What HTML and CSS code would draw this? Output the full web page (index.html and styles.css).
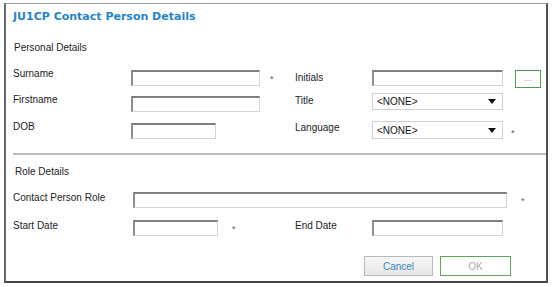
FILE: index.html
```html
<!DOCTYPE html>
<html>
<head>
<meta charset="utf-8">
<link rel="stylesheet" href="styles.css">
</head>
<body>
<div class="dialog">
  <h1 class="title">JU1CP Contact Person Details</h1>
  <div class="section-title">Personal Details</div>
  <div class="grid personal">
    <div class="lbl lbl-left">Surname</div>
    <div class="field"><span class="input w129"></span><span class="req req-a">*</span></div>
    <div class="lbl lbl-right lbl-init">Initials</div>
    <div class="field"><span class="input w131"></span><span class="dots">...</span></div>

    <div class="lbl lbl-left">Firstname</div>
    <div class="field"><span class="input w129"></span></div>
    <div class="lbl lbl-right">Title</div>
    <div class="field"><span class="select w131 up3"><span>&lt;NONE&gt;</span><svg width="8" height="5" viewBox="0 0 8 5"><polygon points="0,0 8,0 4,5" fill="#111"/></svg></span></div>

    <div class="lbl lbl-left">DOB</div>
    <div class="field"><span class="input w85"></span></div>
    <div class="lbl lbl-right">Language</div>
    <div class="field"><span class="select w131 tall up2"><span>&lt;NONE&gt;</span><svg width="8" height="5" viewBox="0 0 8 5"><polygon points="0,0 8,0 4,5" fill="#111"/></svg></span><span class="req req-b">*</span></div>
  </div>
  <div class="sep"></div>
  <div class="section-title role-title">Role Details</div>
  <div class="grid role">
    <div class="lbl lbl-role">Contact Person Role</div>
    <div class="field span3"><span class="input w374"></span><span class="req req-c">*</span></div>

    <div class="lbl lbl-role">Start Date</div>
    <div class="field"><span class="input w85"></span><span class="req req-c">*</span></div>
    <div class="lbl lbl-role">End Date</div>
    <div class="field"><span class="input w131"></span></div>
  </div>
  <div class="footer">
    <button class="btn cancel">Cancel</button>
    <button class="btn ok">OK</button>
  </div>
</div>
</body>
</html>
```
FILE: styles.css
```css
* { box-sizing: border-box; }
html, body { margin: 0; padding: 0; background: #fff; }
body {
  font-family: "Liberation Sans", Arial, sans-serif;
  font-size: 10px;
  color: #222;
  width: 554px;
  height: 287px;
  overflow: hidden;
}
.dialog {
  margin: 3px 0 0 4px;
  width: 544px;
  height: 280px;
  border-style: solid;
  border-width: 1px 2px 2px 2px;
  border-color: #9a9a9a #505050 #444 #6a6a6a;
  padding: 5px 0 0 7px;
}
.title {
  margin: 0;
  font-family: "DejaVu Sans", Verdana, sans-serif;
  font-weight: bold;
  font-size: 11px;
  line-height: 16px;
  color: #2384cc;
}
.section-title {
  margin-top: 16px;
  line-height: 14px;
  font-size: 10px;
  color: #222;
  padding-left: 1px;
}
.grid {
  display: grid;
}
.personal {
  margin-top: 15px;
  grid-template-columns: 118px 164px 77px auto;
  grid-template-rows: 26px 27px 16px;
}
.role {
  margin-top: 13px;
  grid-template-columns: 120px 162px 77px auto;
  grid-template-rows: 28px 16px;
}
.lbl {
  align-self: start;
  line-height: 12px;
  white-space: nowrap;
}
.lbl-left { margin-top: -2px; }
.lbl-right { margin-top: -1px; }
.lbl-init { margin-top: 2px; }
.lbl-role { margin-top: 0; }
.field {
  display: flex;
  align-items: flex-start;
}
.span3 { grid-column: 2 / 5; }
.input {
  display: block;
  flex-shrink: 0;
  height: 16px;
  background: #fff;
  border-style: solid;
  border-width: 2px 1px 1px 2px;
  border-color: #7e7e7e #d4d4d4 #d4d4d4 #8e8e8e;
}
.w129 { width: 129px; }
.w131 { width: 131px; }
.w85 { width: 85px; }
.w374 { width: 374px; }
.req {
  font-size: 9px;
  color: #555;
  line-height: 9px;
  margin-top: 5px;
}
.req-a { margin-left: 10px; }
.req-b { margin-left: 8px; margin-top: 6px; }
.req-c { margin-left: 14px; }
.dots {
  margin-left: 12px;
  width: 26px;
  height: 18px;
  border: 1px solid #4f9a4f;
  color: #999;
  font-size: 9px;
  line-height: 15px;
  text-align: center;
}
.select {
  display: flex;
  align-items: center;
  justify-content: space-between;
  height: 17px;
  border: 1px solid #cfcfcf;
  background: #fff;
  padding: 0 6px 0 4px;
  color: #111;
}
.select.tall { height: 18px; }
.up3 { margin-top: -3px; }
.up2 { margin-top: -2px; }
.sep {
  margin-top: 14px;
  height: 2px;
  background: #bcbcbc;
}
.role-title { margin-top: 10px; padding-left: 2px; }
.footer {
  display: flex;
  justify-content: flex-end;
  gap: 7px;
  padding-right: 35px;
  margin-top: 20px;
}
.btn {
  font-family: "Liberation Sans", Arial, sans-serif;
  font-size: 10px;
  height: 20px;
  padding: 0;
  cursor: default;
}
.cancel {
  width: 69px;
  background: linear-gradient(#f7f7f7, #e6e6e6);
  border: 1px solid #b9b9b9;
  color: #3a86c4;
}
.ok {
  width: 71px;
  background: #fff;
  border: 1px solid #58a858;
  color: #aaa;
}
```
